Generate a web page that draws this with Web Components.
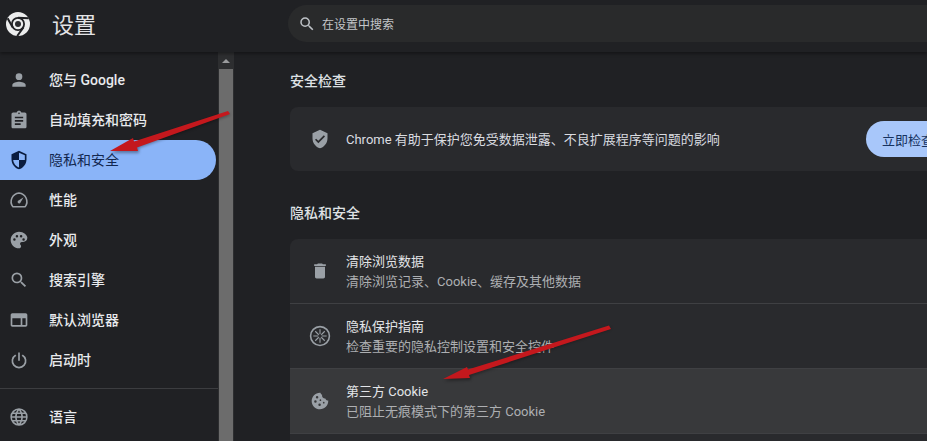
<!DOCTYPE html>
<html lang="zh-CN"><head><meta charset="utf-8"><title>设置</title>
<style>
html,body{margin:0;height:100%;background:#202124;overflow:hidden}
body{font-family:Roboto,"Noto Sans CJK SC",sans-serif;color:#e8eaed}
</style></head><body>
<settings-app>
  <settings-header slot="header"></settings-header>
  <nav-rail slot="nav">
    <nav-item icon="person">您与 Google</nav-item>
    <nav-item icon="clip">自动填充和密码</nav-item>
    <nav-item icon="shield" active>隐私和安全</nav-item>
    <nav-item icon="gauge">性能</nav-item>
    <nav-item icon="palette">外观</nav-item>
    <nav-item icon="search">搜索引擎</nav-item>
    <nav-item icon="browser">默认浏览器</nav-item>
    <nav-item icon="power">启动时</nav-item>
    <nav-sep></nav-sep>
    <nav-item icon="globe">语言</nav-item>
  </nav-rail>
  <fake-scrollbar slot="bar"></fake-scrollbar>
  <settings-main slot="main">
    <section-title>安全检查</section-title>
    <settings-card>
      <safety-row>Chrome 有助于保护您免受数据泄露、不良扩展程序等问题的影响</safety-row>
    </settings-card>
    <section-title second>隐私和安全</section-title>
    <settings-card>
      <link-row icon="trash" title="清除浏览数据">清除浏览记录、Cookie、缓存及其他数据</link-row>
      <link-row icon="guide" title="隐私保护指南">检查重要的隐私控制设置和安全控件</link-row>
      <link-row icon="cookie" title="第三方 Cookie" hover>已阻止无痕模式下的第三方 Cookie</link-row>
      <link-row icon="none" title=""></link-row>
    </settings-card>
  </settings-main>
  <red-arrows slot="over"></red-arrows>
</settings-app>
<script>
const SEARCH='<path d="M15.500 14h-.79l-.28-.27A6.471 6.471 0 0 0 16 9.500 6.500 6.500 0 1 0 9.500 16c1.610 0 3.090-.59 4.230-1.570l.27.28v.79l5 4.990L20.490 19l-4.990-5zm-6 0C7.010 14 5 11.990 5 9.500S7.010 5 9.500 5 14 7.010 14 9.500 11.990 14 9.500 14z"/>';
const ICONS={
 person:'<circle cx="12" cy="8" r="4"/><path d="M4 20v-2c0-2.700 5.300-4 8-4s8 1.300 8 4v2z"/>',
 clip:'<path fill-rule="evenodd" d="M19 3h-4.200C14.400 1.800 13.300 1 12 1s-2.400.8-2.800 2H5c-1.100 0-2 .9-2 2v15c0 1.100.9 2 2 2h14c1.100 0 2-.9 2-2V5c0-1.100-.9-2-2-2zm-7 0c.6 0 1 .4 1 1s-.4 1-1 1-1-.4-1-1 .4-1 1-1zM7 8h10v2H7zm0 4h10v2H7zm0 4h7v2H7z"/>',
 shield:'<path fill-rule="evenodd" d="M12 1 3 5v6c0 5.600 3.800 10.700 9 12 5.200-1.300 9-6.400 9-12V5zm0 2.200 7 3.100V12h-7zM12 12v8.900C8.300 19.800 5.500 16.100 5 12z"/>',
 gauge:'<path fill="none" stroke="currentColor" stroke-width="1.900" stroke-linejoin="round" d="M4.500 20a10.500 10.500 0 0 1 7.500-16.500A10.500 10.500 0 0 1 19.500 20z"/><path d="M10.600 15.400a2 2 0 0 0 2.900.1L17.500 8.600l-6.500 4.200a2 2 0 0 0-.4 2.600z"/>',
 palette:'<path fill-rule="evenodd" d="M12 2C6.500 2 2 6.500 2 12s4.500 10 10 10c1.400 0 2.500-1.100 2.500-2.500 0-.6-.2-1.200-.6-1.600-.4-.5-.6-1-.6-1.500 0-1.100.9-2 2-2H17c2.800 0 5-2.200 5-5C22 5.900 17.500 2 12 2zM6.500 13a1.500 1.500 0 1 1 0-3 1.500 1.500 0 0 1 0 3zm3-4a1.500 1.500 0 1 1 0-3 1.500 1.500 0 0 1 0 3zm5 0a1.500 1.500 0 1 1 0-3 1.500 1.500 0 0 1 0 3zm3 4a1.500 1.500 0 1 1 0-3 1.500 1.500 0 0 1 0 3z"/>',
 search:SEARCH,
 browser:'<path fill-rule="evenodd" d="M20 4H4c-1.100 0-2 .9-2 2v12c0 1.100.9 2 2 2h16c1.100 0 2-.9 2-2V6c0-1.100-.9-2-2-2zM4 10h10v8H4zm12 0h4v8h-4z"/>',
 power:'<path d="M11 3h2v10h-2z"/><path d="M16.600 5.400l-1.400 1.400a7 7 0 1 1-6.400 0L7.400 5.400a9 9 0 1 0 9.200 0z"/>',
 globe:'<path fill="none" stroke="currentColor" stroke-width="1.800" d="M12 2.500a9.500 9.500 0 1 0 0 19 9.500 9.500 0 0 0 0-19zM2.500 12h19M3.800 7.500h16.400M3.800 16.500h16.400M12 2.500c-5 5.500-5 13.500 0 19M12 2.500c5 5.500 5 13.500 0 19"/>',
 trash:'<path d="M6 19c0 1.100.9 2 2 2h8c1.100 0 2-.9 2-2V7H6zM19 4h-3.500l-1-1h-5l-1 1H5v2h14z"/>',
 guide:'<circle cx="12" cy="12" r="11.300" fill="none" stroke="currentColor" stroke-width="1.900"/><path fill="none" stroke="currentColor" stroke-width="1.300" d="M12 4v6M12 14v6M4 12h6M14 12h6M6.300 6.300l4.200 4.200M13.500 13.500l4.200 4.200M17.700 6.300l-4.200 4.200M10.500 13.500l-4.200 4.200"/>',
 cookie:'<path fill-rule="evenodd" d="M21.900 11.500c-1.700.1-3.100-.9-3.500-2.500-1.900.3-3.700-1.100-3.900-3-.1-.5 0-1 .1-1.400C13.500 4 12.700 3 12.500 2 6.500 1.700 2 6.500 2 12c0 5.500 4.500 10 10 10s10.200-4.700 9.900-10.500zM8.500 9a1.500 1.500 0 1 1 0-3 1.500 1.500 0 0 1 0 3zm-2 5a1.500 1.500 0 1 1 0-3 1.500 1.500 0 0 1 0 3zm5 4a1.500 1.500 0 1 1 0-3 1.500 1.500 0 0 1 0 3zm1-6a1 1 0 1 1 0-2 1 1 0 0 1 0 2zm4 3a1 1 0 1 1 0-2 1 1 0 0 1 0 2z"/>',
 check:'<path fill-rule="evenodd" d="M12 1 3 5v6c0 5.600 3.800 10.700 9 12 5.200-1.300 9-6.400 9-12V5zm-2 16-4-4 1.400-1.400 2.600 2.600 6.600-6.600L18 9z"/>',
 none:''
};
const icon=(n,s=20)=>`<svg viewBox="0 0 24 24" width="${s}" height="${s}" fill="currentColor" overflow="visible" aria-hidden="true">${ICONS[n]||''}</svg>`;
function def(name,css,html){
  customElements.define(name,class extends HTMLElement{
    constructor(){super();const r=this.attachShadow({mode:'open'});
      r.innerHTML=`<style>${css}</style>`+(typeof html==='function'?'':html);}
    connectedCallback(){
      if(typeof html==='function'){this.shadowRoot.innerHTML=`<style>${css}</style>`+html(this);}
    }
  });
}
def('settings-app',`:host{display:grid;grid-template-columns:218px 16px 1fr;grid-template-rows:52px 389px;width:927px;height:441px;overflow:hidden;position:relative;background:#202124}
 slot[name=header]{display:block;grid-column:1/4}`,
 `<slot name="header"></slot><slot name="nav"></slot><slot name="bar"></slot><slot name="main"></slot><slot name="over"></slot>`);
def('settings-header',`:host{display:flex;align-items:center;height:52px;background:#202124;box-shadow:0 2px 3px rgba(0,0,0,.35);position:relative;z-index:2;box-sizing:border-box}
 .logo{margin:-4px 0 0 6px;width:24px;height:24px;flex:none}
 h1{margin:0 0 0 22px;width:236px;font:400 22px/1 Roboto,"Noto Sans CJK SC",sans-serif;color:#e3e4e6;flex:none}
 .search{flex:none;width:680px;height:37px;margin-top:-5px;border-radius:19px;background:#292a2b;display:flex;align-items:center;color:#c4c6c9;font-size:12px}
 .s{display:flex;margin:0 6px 0 10px;color:#bdc1c6}`,
 `<svg class="logo" viewBox="0 0 24 24"><circle cx="12" cy="12" r="12" fill="#eceded"/><circle cx="12" cy="12" r="7" fill="#202124"/><circle cx="12" cy="12" r="5.200" fill="#eceded"/><circle cx="12" cy="12" r="3" fill="#2b2c2f"/><path d="M12 5.700 22.800 6.300M6.600 15.300 1.600 6.300M17.400 15.300 11.200 24" stroke="#202124" stroke-width="2" fill="none"/></svg>
 <h1>设置</h1><div class="search"><span class="s">${icon('search',18)}</span><span>在设置中搜索</span></div>`);
def('nav-rail',`:host{display:block;padding-top:8px;background:#202124;height:389px;box-sizing:border-box;overflow:hidden}`,`<slot></slot>`);
def('nav-item',`:host{display:flex;align-items:center;height:40px;width:216px;box-sizing:border-box;border-radius:0 20px 20px 0;color:#e8eaed;font-size:14px;font-weight:500}
 :host([active]){background:#8ab4f8;color:#12274f;font-weight:400}
 svg{margin:0 20px 0 9px;color:#9aa0a6;flex:none}:host([active]) svg{color:#0b1d3f}
 span{margin-bottom:2px}`,
 el=>icon(el.getAttribute('icon'))+`<span><slot></slot></span>`);
def('nav-sep',`:host{display:block;height:1px;background:#3c3d40;width:218px;margin:8px 0}`,``);
def('fake-scrollbar',`:host{display:flex;flex-direction:column;align-items:center;background:#2d2e30;height:389px;width:16px}
 .u{height:17px;display:flex;align-items:center;justify-content:center;flex:none}
 .u i{display:block;border:4px solid transparent;border-top:0;border-bottom:4px solid #9a9b9d}
 .t{flex:1;width:14px;background:#6c6c6c}`,`<div class="u"><i></i></div><div class="t"></div>`);
def('settings-main',`:host{display:block;padding:0 0 0 56px;height:389px;overflow:hidden;background:#202124}`,`<slot></slot>`);
def('section-title',`:host{display:flex;align-items:center;height:20px;margin:18px 0 17px;font-size:14px;font-weight:500;color:#dfe1e4}
 :host([second]){margin:31px 0 17px}`,`<slot></slot>`);
def('settings-card',`:host{display:block;width:700px;background:#292a2d;border-radius:8px;overflow:hidden}`,`<slot></slot>`);
def('safety-row',`:host{display:flex;align-items:center;height:64px;font-size:13px;color:#dadce0}
 svg{margin:0 16px 0 20px;color:#9aa0a6;flex:none}
 .sp{width:520px;flex:none;white-space:nowrap;margin-bottom:2px}
 button{height:36px;width:120px;border:0;border-radius:18px;background:#a8c7fa;color:#16325f;font:400 13px Roboto,"Noto Sans CJK SC",sans-serif;padding:0 0 0 16px;text-align:left;white-space:nowrap;flex:none}`,
 `${icon('check')}<span class="sp"><slot></slot></span><button>立即检查</button>`);
def('link-row',`:host{display:flex;align-items:center;height:65px;box-sizing:border-box;border-top:1px solid #3f4043;color:#e3e4e6}
 :host(:first-child){border-top:0;height:64px}
 :host([hover]){background:#38393b}
 svg{margin:0 16px 0 20px;color:#9aa0a6;flex:none}
 .w{margin-top:1px}
 .t{font-size:13px;line-height:20px;color:#e3e5e8}
 .s{font-size:13px;line-height:20px;color:#adafb2}`,
 el=>`${icon(el.getAttribute('icon'))}<div class="w"><div class="t">${el.getAttribute('title')}</div><div class="s"><slot></slot></div></div>`);
def('red-arrows',`:host{position:absolute;inset:0;pointer-events:none;z-index:5}svg{display:block}`,
 `<svg width="927" height="441"><defs><filter id="b" x="-10%" y="-10%" width="120%" height="130%"><feGaussianBlur stdDeviation="1.500"/></filter></defs>
 <g fill="#000" opacity=".35" filter="url(#b)" transform="translate(1 2)"><path d="M229 113 138 146 138 151 110 151 133 138 135 142 228 111z"/><path d="M610 327 470 374 470 378 443 379 467 367 468 371 609 325z"/></g>
 <g fill="#c4181d"><path d="M230 114 137 147.500 138 151 110 151 133 138 134 141.500 228 111z"/><path d="M611 329 469 375 470 378 443 379 467 367 468 369.500 609 325.500z"/></g></svg>`);
</script>
</body></html>
